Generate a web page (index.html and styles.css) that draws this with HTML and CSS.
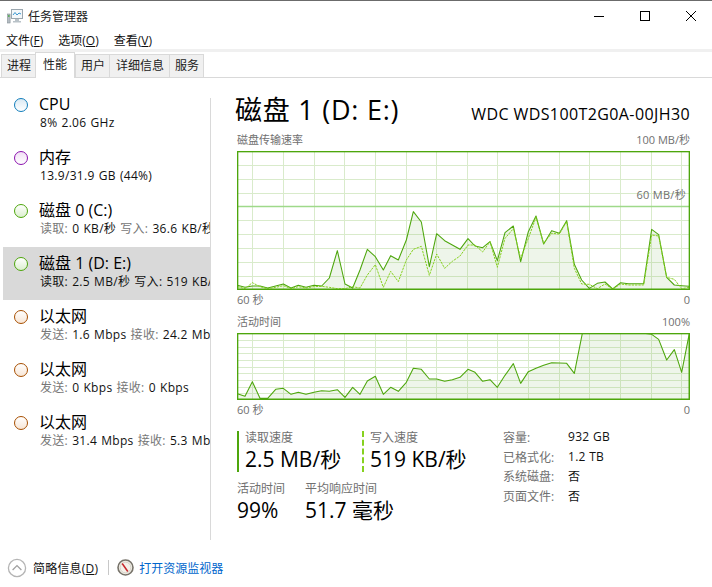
FILE: index.html
```html
<!DOCTYPE html>
<html lang="zh">
<head>
<meta charset="utf-8">
<title>任务管理器</title>
<link rel="stylesheet" href="styles.css">
</head>
<body>
<div class="window">
  <header class="titlebar">
    <svg class="app-icon" width="16" height="16" viewBox="0 0 16 16">
      <rect x="4.5" y="1.5" width="11" height="9" fill="#f3f7fa" stroke="#9aa6ae"/>
      <path d="M6 7l2-2.5 2 2.5 2-2 2 1" fill="none" stroke="#3a97d0"/>
      <rect x="0.5" y="6" width="2.6" height="9" fill="#b4bcc2" stroke="#858f97" stroke-width=".6"/>
      <rect x="1" y="7" width="1.6" height="2" fill="#5fae5f"/>
      <path d="M8 11h4v2h2v1.5H6V13h2z" fill="#b9c2c8"/>
    </svg>
    <span class="app-title">任务管理器</span>
    <div class="win-controls">
      <svg width="46" height="29" viewBox="0 0 46 29"><path d="M18 15.5h10" stroke="#000"/></svg>
      <svg width="46" height="29" viewBox="0 0 46 29"><rect x="18.5" y="10.5" width="9" height="9" fill="none" stroke="#000"/></svg>
      <svg width="46" height="29" viewBox="0 0 46 29"><path d="M18 10l10 10M28 10L18 20" stroke="#000" fill="none"/></svg>
    </div>
  </header>
  <nav class="menubar">
    <span>文件(<u>F</u>)</span><span>选项(<u>O</u>)</span><span>查看(<u>V</u>)</span>
  </nav>
  <div class="tabs">
    <span class="tab">进程</span>
    <span class="tab active">性能</span>
    <span class="tab">用户</span>
    <span class="tab wide">详细信息</span>
    <span class="tab">服务</span>
  </div>
  <div class="content">
    <aside class="sidebar">
      <div class="item"><i class="dot cpu"></i><div class="item-text"><div class="item-title">CPU</div><div class="item-sub"><b>8% 2.06 GHz</b></div></div></div>
      <div class="item"><i class="dot mem"></i><div class="item-text"><div class="item-title">内存</div><div class="item-sub"><b>13.9/31.9 GB (44%)</b></div></div></div>
      <div class="item"><i class="dot disk"></i><div class="item-text"><div class="item-title">磁盘 0 (C:)</div><div class="item-sub">读取: <b>0 KB/秒</b> 写入: <b>36.6 KB/秒</b></div></div></div>
      <div class="item selected"><i class="dot disk"></i><div class="item-text"><div class="item-title">磁盘 1 (D: E:)</div><div class="item-sub"><b>读取: 2.5 MB/秒 写入: 519 KB/秒</b></div></div></div>
      <div class="item"><i class="dot net"></i><div class="item-text"><div class="item-title">以太网</div><div class="item-sub">发送: <b>1.6 Mbps</b> 接收: <b>24.2 Mbps</b></div></div></div>
      <div class="item"><i class="dot net"></i><div class="item-text"><div class="item-title">以太网</div><div class="item-sub">发送: <b>0 Kbps</b> 接收: <b>0 Kbps</b></div></div></div>
      <div class="item"><i class="dot net"></i><div class="item-text"><div class="item-title">以太网</div><div class="item-sub">发送: <b>31.4 Mbps</b> 接收: <b>5.3 Mbps</b></div></div></div>
    </aside>
    <div class="separator"></div>
    <main class="main">
      <div class="heading">
        <h1>磁盘 1 (D: E:)</h1>
        <span class="model">WDC WDS100T2G0A-00JH30</span>
      </div>
      <div class="axis-row top"><span>磁盘传输速率</span><span>100 MB/秒</span></div>
      <div class="graph tall">
        <svg width="453" height="139" viewBox="21 63 1359 417">
          <path class="grid" d="M67.5 63V480M160.5 63V480M253.5 63V480M343.5 63V480M436.5 63V480M529.5 63V480M619.5 63V480M712.5 63V480M802.5 63V480M895.5 63V480M988.5 63V480M1078.5 63V480M1171.5 63V480M1264.5 63V480M1354.5 63V480M21 106.5H1380M21 148.5H1380M21 190.5H1380M21 271.5H1380M21 313.5H1380M21 355.5H1380M21 397.5H1380M21 439.5H1380"/>
          <path class="limit" d="M21 229.5H1380"/>
          <path class="area" d="M22 478L22 466 45 472 67 468 90 468 113 474 137 468 160 462 183 474 205 466 228 472 252 466 275 468 298 444 322 362 345 462 368 474 390 420 412 358 436 380 460 420 482 377 505 390 529 330 550 245 574 276 598 410 620 311 644 332 667 345 690 358 714 326 735 348 758 353 780 335 802 392 825 308 850 288 872 395 895 305 918 258 941 342 965 302 988 310 1010 272 1033 403 1055 450 1078 475 1102 460 1125 456 1148 477 1172 458 1195 461 1218 461 1241 461 1265 298 1286 314 1310 442 1333 465 1355 467 1378 469 1378 478Z"/>
          <polyline class="dash" points="22,470 45,476 67,458 90,470 113,476 137,472 160,467 183,476 205,470 228,474 252,470 275,469 298,472 322,476 345,476 368,470 390,474 412,435 436,404 460,472 482,424 505,455 529,390 550,358 574,349 598,436 620,372 644,415 667,394 690,378 714,345 735,345 758,366 780,335 802,412 825,325 850,296 872,385 895,325 918,262 941,340 965,310 988,312 1010,275 1033,415 1055,462 1078,463 1102,476 1125,462 1148,477 1172,462 1195,465 1218,465 1241,465 1265,315 1286,318 1310,442 1333,448 1355,476 1378,472"/>
          <rect class="frame" x="23" y="65" width="1355" height="413"/>
        </svg>
        <span class="limit-label">60 MB/秒</span>
      </div>
      <div class="axis-row"><span>60 秒</span><span>0</span></div>
      <div class="axis-row second"><span>活动时间</span><span>100%</span></div>
      <div class="graph short">
        <svg width="453" height="67" viewBox="21 54 1359 201">
          <path class="grid" d="M67.5 54V255M160.5 54V255M253.5 54V255M343.5 54V255M436.5 54V255M529.5 54V255M619.5 54V255M712.5 54V255M802.5 54V255M895.5 54V255M988.5 54V255M1078.5 54V255M1171.5 54V255M1264.5 54V255M1354.5 54V255M21 76.5H1380M21 97.5H1380M21 115.5H1380M21 136.5H1380M21 157.5H1380M21 175.5H1380M21 196.5H1380M21 217.5H1380M21 235.5H1380"/>
          <path class="area" d="M22 253L22 236 45 244 67 200 90 250 113 250 137 223 160 220 183 238 205 232 228 238 252 232 275 227 298 229 322 224 345 247 368 217 390 238 412 198 436 184 460 238 482 217 505 229 529 202 550 160 574 163 598 192 620 192 644 199 667 194 690 187 714 163 735 172 758 199 780 194 802 217 825 181 850 146 872 205 895 170 918 160 941 151 965 143 988 144 1010 145 1033 175 1057 55 1078 55 1102 55 1125 55 1148 55 1172 55 1195 55 1218 55 1241 55 1265 58 1286 73 1310 135 1333 104 1355 172 1378 55 1378 253Z"/>
          <rect class="frame" x="23" y="56" width="1355" height="197"/>
        </svg>
      </div>
      <div class="axis-row"><span>60 秒</span><span>0</span></div>
      <section class="stats">
        <div class="stats-left">
          <div class="stats-row">
            <div class="stat rate read"><div class="stat-label">读取速度</div><div class="stat-value">2.5 MB/秒</div></div>
            <div class="stat rate write"><div class="stat-label">写入速度</div><div class="stat-value">519 KB/秒</div></div>
          </div>
          <div class="stats-row lower">
            <div class="stat"><div class="stat-label">活动时间</div><div class="stat-value">99%</div></div>
            <div class="stat"><div class="stat-label">平均响应时间</div><div class="stat-value">51.7 毫秒</div></div>
          </div>
        </div>
        <dl class="props">
          <dt>容量:</dt><dd>932 GB</dd>
          <dt>已格式化:</dt><dd>1.2 TB</dd>
          <dt>系统磁盘:</dt><dd>否</dd>
          <dt>页面文件:</dt><dd>否</dd>
        </dl>
      </section>
    </main>
  </div>
  <footer class="footer">
    <svg width="20" height="20" viewBox="0 0 20 20"><circle cx="10" cy="10" r="8.6" fill="#fff" stroke="#b4b4b4" stroke-width="1.3"/><path d="M5.6 12l4.4-4.4 4.4 4.4" fill="none" stroke="#a0a0a0" stroke-width="1.3"/></svg>
    <span class="fewer">简略信息(<u>D</u>)</span>
    <span class="foot-sep"></span>
    <svg width="17" height="17" viewBox="0 0 17 17"><circle cx="8.5" cy="8.5" r="7.5" fill="#f4f1ea" stroke="#77736a" stroke-width="1.6"/><circle cx="8.5" cy="8.5" r="5.4" fill="none" stroke="#d6d1c6"/><path d="M5.2 4.5l5.6 8" stroke="#c8262a" stroke-width="1.5"/></svg>
    <a class="monitor-link">打开资源监视器</a>
  </footer>
</div>
</body>
</html>
```

FILE: styles.css
```css
* { box-sizing: border-box; }
html, body { margin: 0; padding: 0; }
body {
  width: 712px;
  height: 587px;
  overflow: hidden;
  background: #fff;
  color: #000;
  font-family: "Open Sans", "Noto Sans CJK SC", sans-serif;
  font-size: 12px;
}
.window {
  display: flex;
  flex-direction: column;
  height: 587px;
  border-top: 1px solid #6b6b6b;
}
.titlebar {
  display: flex;
  align-items: center;
  height: 29px;
  flex: none;
  padding-left: 7px;
}
.app-title { margin-left: 5px; color: #222; }
.win-controls { display: flex; margin-left: auto; margin-right: -2px; }
.win-controls svg { display: block; }
.menubar {
  display: flex;
  gap: 15px;
  align-items: center;
  height: 22px;
  flex: none;
  padding-left: 6px;
  border-bottom: 3px solid #f0f0f0;
  color: #111;
}
.tabs {
  display: flex;
  align-items: flex-end;
  height: 26px;
  flex: none;
  padding-left: 1px;
  border-bottom: 1px solid #d9d9d9;
}
.tab {
  height: 24px;
  line-height: 22px;
  padding: 0 4px 0 5px;
  margin-right: -1px;
  margin-bottom: -1px;
  background: #f0f0f0;
  border: 1px solid #d9d9d9;
  color: #222;
}
.tab.wide { padding: 0 5px 0 6px; }
.tab.active {
  position: relative;
  height: 26px;
  padding: 0 7px;
  margin-right: 0;
  background: #fff;
  border-bottom: 0;
  line-height: 23px;
}
.content { display: flex; flex: 1; min-height: 0; }
.sidebar {
  width: 207px;
  margin-left: 3px;
  padding-top: 10px;
  flex: none;
  overflow: hidden;
}
.item {
  display: flex;
  height: 53px;
  padding: 6px 0 0 11px;
  white-space: nowrap;
}
.item.selected { background: #d9d9d9; }
.dot {
  width: 14px;
  height: 14px;
  margin-top: 4px;
  flex: none;
  border-radius: 50%;
  border: 1.5px solid;
}
.cpu { border-color: #117dbb; background: linear-gradient(#dbeaf4, #fff); }
.mem { border-color: #8b12ae; background: linear-gradient(#f1def5, #fff); }
.disk { border-color: #4da60c; background: linear-gradient(#fff, #dcefcf); }
.net { border-color: #a74f01; background: linear-gradient(#fff, #f8e6d6); }
.item-text { margin-left: 11px; }
.item-title { font-size: 16px; line-height: 21px; }
.item-sub { font-size: 12px; line-height: 16px; color: #777; margin-left: 1px; letter-spacing: .3px; word-spacing: .7px; }
.item-sub b { font-weight: 400; color: #111; }
.separator {
  width: 1px;
  flex: none;
  margin: 20px 0 8px;
  background: #d9d9d9;
}
.main { flex: 1; min-width: 0; padding: 16px 22px 0 26px; }
.heading {
  display: flex;
  justify-content: space-between;
  align-items: baseline;
  height: 32px;
  margin-left: -2px;
}
h1 { margin: 0; font-size: 27px; font-weight: 400; line-height: 32px; letter-spacing: .75px; }
.model { font-size: 16px; letter-spacing: .4px; }
.axis-row {
  display: flex;
  justify-content: space-between;
  height: 14px;
  margin-top: 3px;
  line-height: 14px;
  font-size: 11px;
  color: #707070;
}
.axis-row.top { margin-top: 7px; }
.axis-row.second { margin-top: 8px; }
.graph { position: relative; margin-top: 4px; }
.graph svg { display: block; }
.grid { fill: none; stroke: #d9ebcb; stroke-width: 3; }
.limit { fill: none; stroke: #9fd98a; stroke-width: 5; }
.area { fill: rgba(125, 180, 90, .13); stroke: #4da60c; stroke-width: 3.2; stroke-linejoin: round; }
.dash { fill: none; stroke: #86d11f; stroke-width: 3; stroke-dasharray: 7 3; }
.frame { fill: none; stroke: #4da60c; stroke-width: 4; }
.limit-label {
  position: absolute;
  right: 4px;
  top: 37px;
  line-height: 14px;
  font-size: 11px;
  letter-spacing: .3px;
  color: #707070;
}
.stats { display: flex; margin-top: 14px; }
.stats-left { width: 266px; flex: none; }
.stats-row { display: flex; gap: 20px; }
.stats-row.lower { margin-top: 10px; }
.stat-label { font-size: 12px; line-height: 14px; color: #707070; }
.stat-value { font-size: 21px; line-height: 26px; margin-top: 1px; }
.rate { height: 41px; padding-left: 6px; }
.read { width: 125px; border-left: 2px solid #4da60c; }
.write { border-left: 2px dashed #86d11f; margin-left: -20px; }
.props {
  display: grid;
  grid-template-columns: 65px auto;
  grid-auto-rows: 19.7px;
  align-items: center;
  align-content: start;
  margin: -4px 0 0;
}
.props dt { color: #707070; font-size: 12px; }
.props dd { margin: 0; color: #111; font-size: 12px; letter-spacing: .3px; }
.footer {
  display: flex;
  align-items: center;
  flex: none;
  height: 39px;
  padding-left: 7px;
}
.fewer { margin-left: 6px; color: #111; letter-spacing: .2px; }
.foot-sep { width: 1px; height: 15px; margin: 0 8px 0 10px; background: #c8c8c8; }
.monitor-link { margin-left: 5px; color: #0066cc; }
```
